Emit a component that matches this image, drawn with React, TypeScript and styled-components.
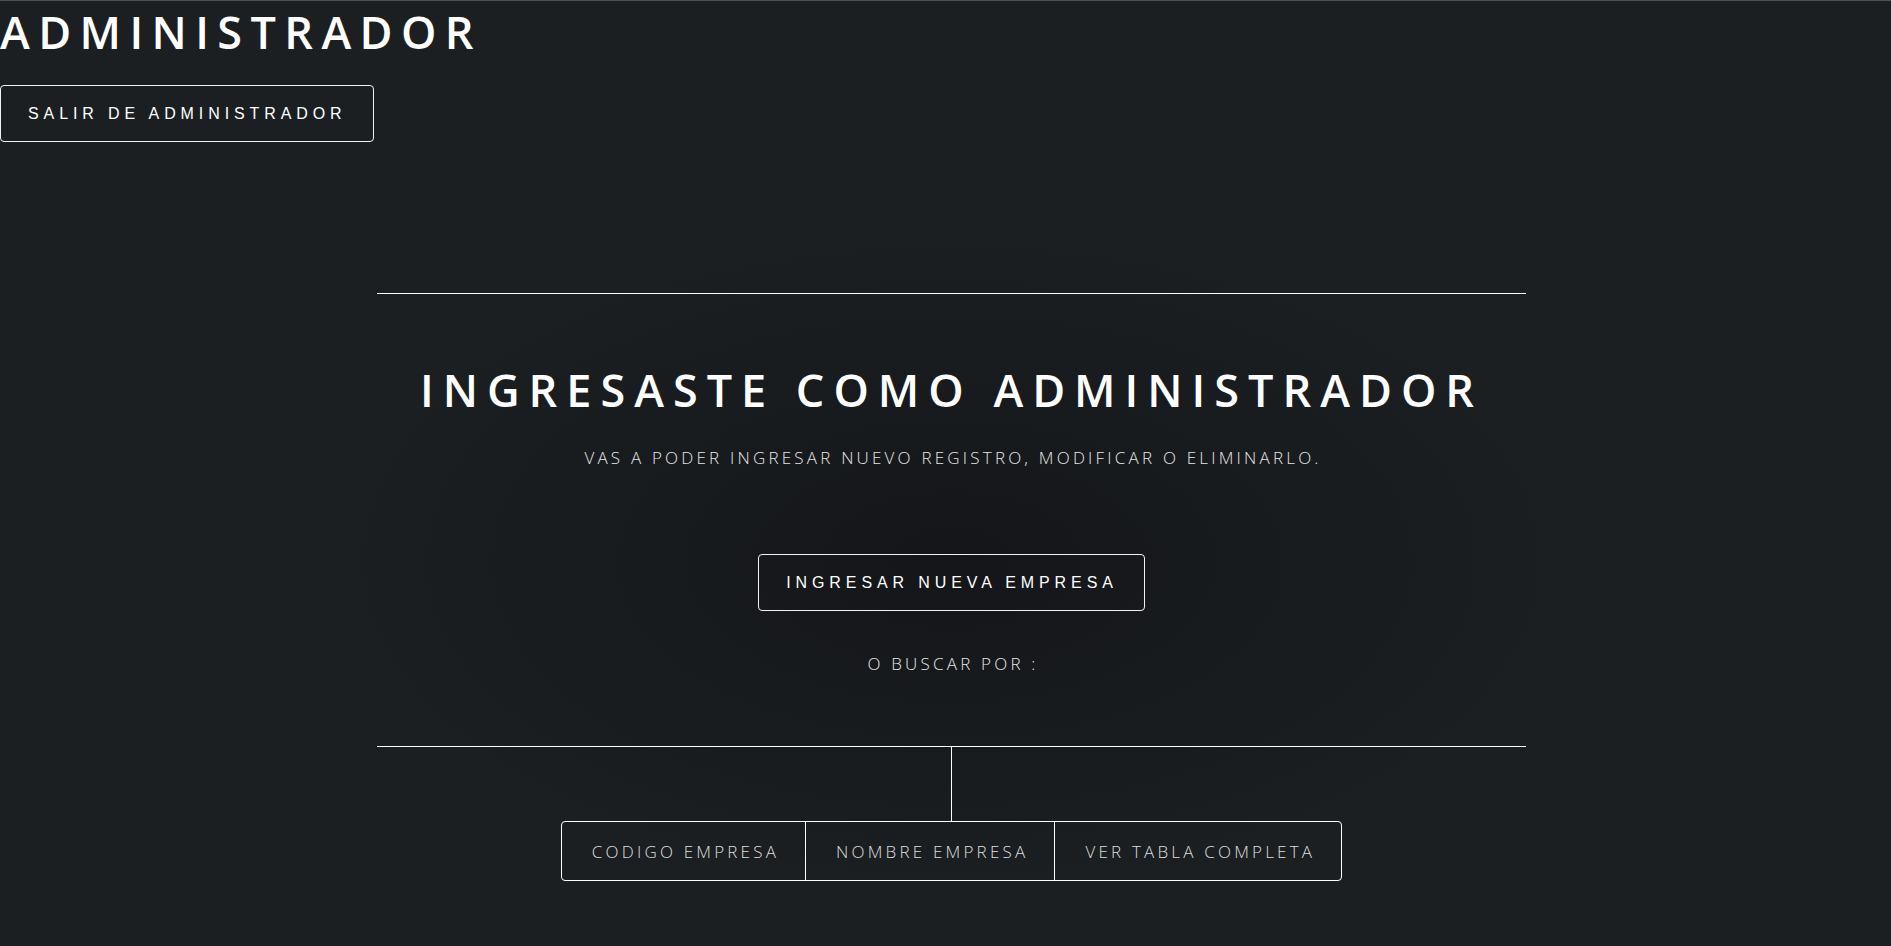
import React from "react";
import styled, { createGlobalStyle } from "styled-components";

const GlobalStyle = createGlobalStyle`
  html, body {
    margin: 0;
    padding: 0;
    background: #1b1f22;
  }
  * { box-sizing: border-box; }
`;

const Page = styled.div`
  min-height: 100vh;
  border-top: 1px solid #4f5154;
  background-color: #1c1f22;
  background-image: radial-gradient(
    ellipse 620px 330px at 951px 560px,
    rgba(17, 19, 22, 0.75) 0%,
    rgba(17, 19, 22, 0.35) 55%,
    rgba(17, 19, 22, 0) 100%
  );
  color: #ffffff;
  font-family: "Open Sans", "Noto Sans", sans-serif;
  overflow: hidden;
`;

const TopBar = styled.div`
  display: flex;
  flex-direction: column;
  align-items: flex-start;
`;

const PageTitle = styled.h1`
  margin: 0;
  font-size: 45px;
  line-height: 62px;
  font-weight: 600;
  letter-spacing: 8.4px;
  text-transform: uppercase;
  color: #ffffff;
`;

const OutlineButton = styled.button<{ $top?: number }>`
  display: inline-flex;
  align-items: center;
  justify-content: center;
  height: 57px;
  margin-top: ${(p) => p.$top ?? 0}px;
  padding: 0 26px 0 27px;
  background: transparent;
  border: 1px solid #f2f2f2;
  border-radius: 4px;
  color: #ffffff;
  font-family: "Liberation Sans", Arial, sans-serif;
  font-size: 16px;
  font-weight: 400;
  letter-spacing: 4.9px;
  text-transform: uppercase;
  cursor: pointer;
`;

const Header = styled.header`
  display: flex;
  flex-direction: column;
  align-items: center;
  padding-left: 12px;
  margin-top: 151px;
`;

const Content = styled.div`
  width: 1149px;
  display: flex;
  flex-direction: column;
  align-items: center;
  text-align: center;
  border-top: 1px solid #ffffff;
  border-bottom: 1px solid #ffffff;
  padding: 65px 0 67px;
`;

const Heading = styled.h2`
  margin: 0;
  font-size: 45px;
  line-height: 62px;
  font-weight: 600;
  letter-spacing: 9px;
  text-transform: uppercase;
  color: #ffffff;
`;

const Lead = styled.p<{ $top: number }>`
  margin: ${(p) => p.$top}px 0 0;
  font-size: 17px;
  line-height: 30px;
  font-weight: 300;
  letter-spacing: 3.2px;
  text-transform: uppercase;
  color: #e6e6e6;
  padding-left: 3px;
`;

const Nav = styled.nav`
  display: flex;
  flex-direction: column;
  align-items: center;
`;

const Connector = styled.div`
  width: 1px;
  height: 74px;
  background: #ffffff;
`;

const TabList = styled.ul`
  display: flex;
  margin: 0;
  padding: 0;
  list-style: none;
  border: 1px solid #ffffff;
  border-radius: 4px;
`;

const Tab = styled.li`
  display: flex;
  align-items: center;
  height: 58px;
  padding: 0 26px 0 30px;
  font-size: 17px;
  font-weight: 300;
  letter-spacing: 3.2px;
  text-transform: uppercase;
  color: #dedede;
  cursor: pointer;

  & + & {
    border-left: 1px solid #ffffff;
  }
`;

export default function App() {
  return (
    <Page>
      <GlobalStyle />
      <TopBar>
        <PageTitle>Administrador</PageTitle>
        <OutlineButton $top={22}>Salir de administrador</OutlineButton>
      </TopBar>
      <Header>
        <Content>
          <Heading>Ingresaste como administrador</Heading>
          <Lead $top={22}>
            Vas a poder ingresar nuevo registro, modificar o eliminarlo.
          </Lead>
          <OutlineButton $top={81}>Ingresar nueva empresa</OutlineButton>
          <Lead $top={38}>O buscar por :</Lead>
        </Content>
        <Nav>
          <Connector />
          <TabList>
            <Tab>Codigo empresa</Tab>
            <Tab>Nombre empresa</Tab>
            <Tab>Ver tabla completa</Tab>
          </TabList>
        </Nav>
      </Header>
    </Page>
  );
}
